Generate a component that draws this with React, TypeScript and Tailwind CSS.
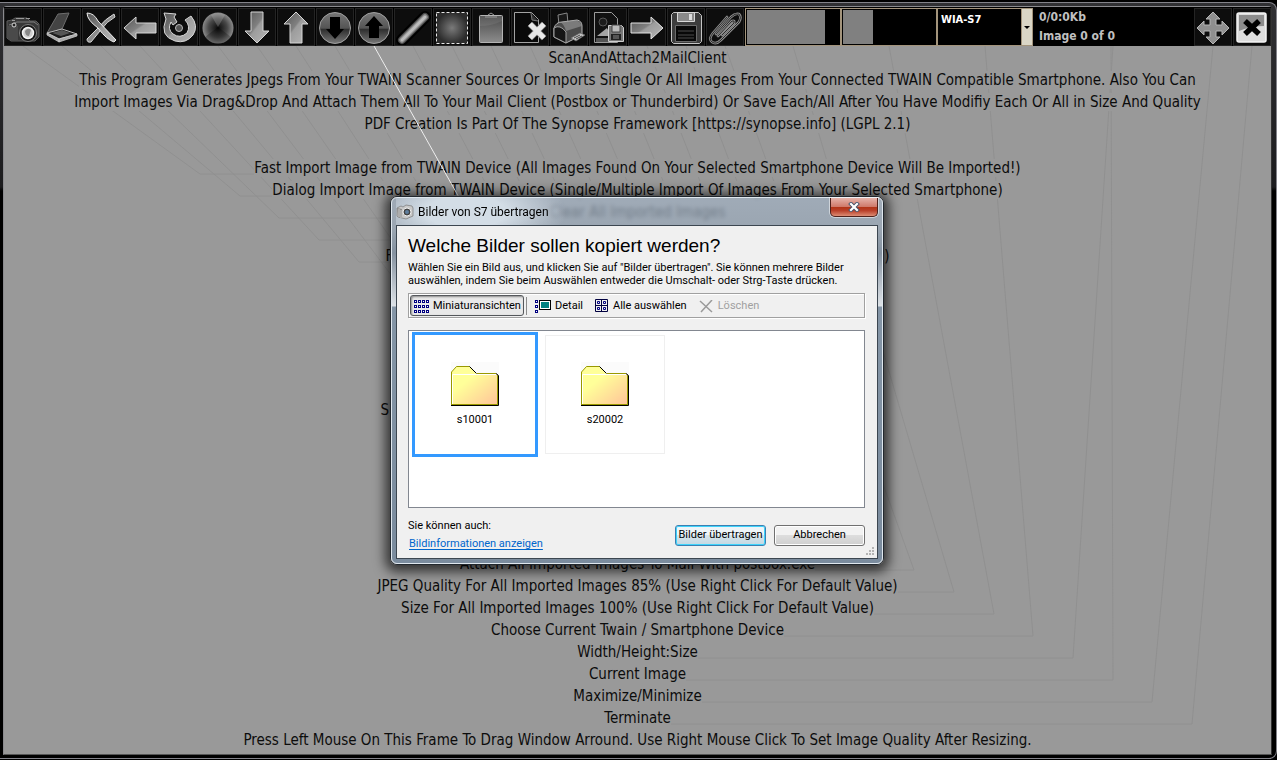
import { useState, type ReactNode } from "react";

type Row = { text?: string; hidden?: [string, string]; width?: string };

const rows: Row[] = [
  { text: "ScanAndAttach2MailClient" },
  {
    text: "This Program Generates Jpegs From Your TWAIN Scanner Sources Or Imports Single Or All Images From Your Connected TWAIN Compatible Smartphone. Also You Can",
  },
  {
    text: "Import Images Via Drag&Drop And Attach Them All To Your Mail Client (Postbox or Thunderbird) Or Save Each/All After You Have Modifiy Each Or All in Size And Quality",
  },
  { text: "PDF Creation Is Part Of The Synopse Framework [https://synopse.info] (LGPL 2.1)" },
  {},
  { text: "Fast Import Image from TWAIN Device (All Images Found On Your Selected Smartphone Device Will Be Imported!)" },
  { text: "Dialog Import Image from TWAIN Device (Single/Multiple Import Of Images From Your Selected Smartphone)" },
  { text: "Clear All Imported Images" },
  {},
  { hidden: ["F", ")"], width: "w-[504px]" },
  {},
  {},
  {},
  {},
  {},
  {},
  { hidden: ["S", ""], width: "w-[514px]" },
  {},
  {},
  {},
  {},
  {},
  {},
  { text: "Attach All Imported Images To Mail With postbox.exe" },
  { text: "JPEG Quality For All Imported Images 85% (Use Right Click For Default Value)" },
  { text: "Size For All Imported Images 100% (Use Right Click For Default Value)" },
  { text: "Choose Current Twain / Smartphone Device" },
  { text: "Width/Height:Size" },
  { text: "Current Image" },
  { text: "Maximize/Minimize" },
  { text: "Terminate" },
  { text: "Press Left Mouse On This Frame To Drag Window Arround. Use Right Mouse Click To Set Image Quality After Resizing." },
];

// x of every toolbar item that has a help line
const anchors = [
  ...Array.from({ length: 19 }, (_, i) => 23 + 39 * i),
  793, 889, 985, 1113, 1111, 1213, 1252,
];
const elbowX = (i: number) => 200 + Math.round(39.68 * i);
const elbowY = (i: number) => 174 + 22 * i;

const metal = "url(#metal)";
const rim = "#d6d6d6";

const tools: { label: string; icon: ReactNode }[] = [
  {
    label: "Fast import",
    icon: (
      <>
        <path d="M3 13l5-1 3-2h12l3 3h6l3 3v13l-4 4H7l-4-3V16z" fill="#383838" stroke="#5e5e5e" />
        <path d="M4 18h10v14H6l-2-2z" fill="#4a4a4a" />
        <path d="M5 17l8-3h17l4 3" stroke="#7c7c7c" />
        <path d="M12 10.500h8M22 10.500h4M8 12.500h3" stroke="#9a9a9a" />
        <circle cx="10" cy="17" r="2" fill="#222" stroke="#d8d8d8" />
        <circle cx="24" cy="25" r="8.500" fill="#151515" stroke="#7e7e7e" />
        <circle cx="24" cy="25" r="5.500" fill="#cfcfcf" stroke="#f4f4f4" strokeWidth="1.500" />
        <path d="M21 23q3-4 6-1l-2 6q-4 0-4-5z" fill="#888" />
      </>
    ),
  },
  {
    label: "Scanner dialog",
    icon: (
      <>
        <path d="M15 6l11-1-7 16-15 4z" fill="#444" stroke="#6d6d6d" />
        <path d="M4 25l15-4 15 5-18 5z" fill="#1d1d1d" stroke="#b9b9b9" />
        <path d="M4 25l12 6v3L4 27zM16 31l18-5v2l-18 6z" fill="#a8a8a8" stroke="#d0d0d0" strokeWidth=".7" />
        <path d="M9 25l10-3 8 3-9 3z" fill="#555" />
      </>
    ),
  },
  {
    label: "Clear images",
    icon: (
      <>
        <path d="M32 6q-9 5-16 14L5 31q0 4 4 3l9-11Q25 13 33 9z" fill="#8c8c8c" stroke={rim} />
        <path d="M5 5q7 0 11 8l18 19-2 2q-7-2-16-14Q5 12 5 5z" fill={metal} stroke="#eee" />
      </>
    ),
  },
  { label: "Previous", icon: <path d="M3 20L15 9v6h20v10H15v6z" fill={metal} stroke={rim} /> },
  {
    label: "Rotate",
    icon: (
      <>
        <path
          d="M4 5l12 1-2 3 3 5-4 3-2-3q-4 7 2 12 7 5 14-1 4-7-2-13l6-4q8 10 2 19-7 9-18 6Q-1 28 6 11z"
          fill={metal}
          stroke={rim}
        />
        <circle cx="19" cy="20" r="3.500" fill="#555" stroke="#bbb" />
      </>
    ),
  },
  {
    label: "Brightness",
    icon: (
      <>
        <circle cx="19" cy="20" r="15.500" fill="url(#ball)" />
        <path d="M19 19L6 29q6 7 13 7t13-7z" fill="#000" opacity=".25" />
        <path d="M19 19L12 7q7-4 14 0z" fill="#ccc" opacity=".25" />
      </>
    ),
  },
  { label: "Move down", icon: <path d="M13 4h12v19h6L19 35 7 23h6z" fill={metal} stroke={rim} /> },
  { label: "Move up", icon: <path d="M19 4l12 12h-6v19H13V16H7z" fill={metal} stroke={rim} /> },
  {
    label: "Decrease",
    icon: (
      <>
        <circle cx="19" cy="20" r="15.500" fill="url(#disc)" stroke="#a0a0a0" />
        <path d="M14 9h10v12h4l-9 10-9-10h4z" fill="#000" />
      </>
    ),
  },
  {
    label: "Increase",
    icon: (
      <>
        <circle cx="19" cy="20" r="15.500" fill="url(#disc)" stroke="#a0a0a0" />
        <path d="M19 8l9 10h-4v12H14V18h-4z" fill="#000" />
      </>
    ),
  },
  {
    label: "Draw",
    icon: (
      <g strokeLinecap="round">
        <path d="M8 32L31 9" stroke="#000" strokeWidth="12" />
        <path d="M8 32L31 9" stroke="#484848" strokeWidth="8" />
        <path d="M8 32L31 9" stroke="#8a8a8a" strokeWidth="5.500" />
        <path d="M8 32L31 9" stroke="#bcbcbc" strokeWidth="3" />
      </g>
    ),
  },
  {
    label: "Select area",
    icon: <rect x="3.500" y="4.500" width="31" height="31" fill="url(#glow)" stroke="#e8e8e8" strokeDasharray="3 2" />,
  },
  {
    label: "Paste",
    icon: (
      <>
        <rect x="7.500" y="7.500" width="23" height="27" rx="1" fill="url(#board)" stroke="#b4b4b4" />
        <path d="M8 18q12 0 22-5V8H8z" fill="#fff" opacity=".08" />
        <path d="M13 9h12M16 7l3-2 3 2" stroke="#999" fill="none" />
      </>
    ),
  },
  {
    label: "Delete page",
    icon: (
      <>
        <path d="M3.500 4.500h17l7 7v23h-24z" fill="#090909" stroke="#a2a2a2" />
        <path d="M20 5l1 7 6 1" fill="#333" stroke="#777" />
        <path d="M19 16l14 14M33 16L19 30" stroke="#777" strokeWidth="6.500" />
        <path d="M19 16l14 14M33 16L19 30" stroke="#e8e8e8" strokeWidth="5" />
      </>
    ),
  },
  {
    label: "Print",
    icon: (
      <>
        <path d="M8 7l9-2 1 10-9 2z" fill="#181818" stroke="#888" />
        <path d="M4 20q2-6 8-6l15-2q5 1 5 6v9l-16 8-12-6z" fill="#4b4b4b" stroke="#b5b5b5" />
        <path d="M4 20q6-4 12 4v11L4 29z" fill="#161616" stroke="#a0a0a0" />
        <path d="M16 23q-2-7-6-9l16-2q5 2 6 6z" fill="#9b9b9b" opacity=".6" />
        <path d="M21 30l9-5 5 2-9 6z" fill="#c5c5c5" stroke="#666" strokeWidth=".7" />
        <path d="M24 30l6-3M26 31l6-3" stroke="#444" />
      </>
    ),
  },
  {
    label: "Save image",
    icon: (
      <>
        <path d="M5.500 4.500h17l6 6v24h-23z" fill="#111" stroke="#9c9c9c" />
        <circle cx="14" cy="14" r="4" fill="#1b1b1b" stroke="#555" />
        <path d="M8 28l10-8 4 8z" fill="#a5a5a5" />
        <path d="M7 30h12v4H7z" fill="#555" />
        <path d="M19.500 17.500h13l2 2v14h-15z" fill="#777" stroke="#cfcfcf" />
        <path d="M23 17h8v7h-8z" fill="#bbb" stroke="#444" />
        <path d="M22 26h10v6H22z" fill="#222" />
        <path d="M24 28h6M24 30h6" stroke="#888" />
      </>
    ),
  },
  { label: "Next", icon: <path d="M3 15h20V9l12 11-12 11v-6H3z" fill={metal} stroke="#e4e4e4" /> },
  {
    label: "Save all",
    icon: (
      <>
        <path d="M4.500 6.500l2-2h25l3 3v26l-2 2h-26l-2-2z" fill="#3d3d3d" stroke="#c4c4c4" />
        <path d="M10.500 4.500h17v9h-17z" fill="#8a8a8a" stroke="#d8d8d8" />
        <path d="M22 6h3v6h-3z" fill="#ddd" />
        <path d="M8.500 17.500h21v16h-21z" fill="#080808" stroke="#6a6a6a" />
        <path d="M11 23h16M11 27h16M11 30h16" stroke="#4a4a4a" />
      </>
    ),
  },
  {
    label: "Attach to mail",
    icon: (
      <g fill="none" strokeLinecap="round" strokeLinejoin="round">
        <path d="M10 26L25 9q4-4 8-3 3 3 0 8L15 32q-5 5-9 2-4-3 1-9L21 9M12 28L26 13q3-1 2 2L16 27" stroke="#8d8d8d" strokeWidth="2.600" />
        <path d="M10 26L25 9q4-4 8-3 3 3 0 8L15 32q-5 5-9 2-4-3 1-9L21 9M12 28L26 13q3-1 2 2L16 27" stroke="#2a2a2a" />
      </g>
    ),
  },
];

function ToolButton({ label, children }: { label: string; children: ReactNode }) {
  return (
    <button type="button" aria-label={label} className="h-[38px] w-[38px] shrink-0 border border-[#242424] bg-[#0d0d0d]">
      <svg viewBox="1 1 36 36" className="block h-9 w-9" fill="none">
        {children}
      </svg>
    </button>
  );
}

function LevelSlider({
  label,
  value,
  max,
  onChange,
}: {
  label: string;
  value: number;
  max: number;
  onChange: (n: number) => void;
}) {
  const pct = (value / max) * 100;
  return (
    <div className="h-[38px] w-24 shrink-0 border border-[#a3947c] bg-black p-px">
      <input
        type="range"
        aria-label={label}
        min={0}
        max={max}
        value={value}
        onChange={(e) => onChange(Number(e.target.value))}
        className="block h-full w-full appearance-none [&::-webkit-slider-thumb]:w-0 [&::-webkit-slider-thumb]:appearance-none"
        style={{ background: `linear-gradient(to right, #808080 ${pct}%, #000 ${pct}%)` }}
      />
    </div>
  );
}

function Folder() {
  return (
    <svg viewBox="0 0 48 48" className="h-12 w-12 bg-[#fbfbfb]" fill="none">
      <defs>
        <linearGradient id="folder" x1="0" y1="0" x2="1" y2="1">
          <stop offset=".35" stopColor="#ffff99" />
          <stop offset="1" stopColor="#ffc299" />
        </linearGradient>
      </defs>
      <path d="M.5 43V10l5-5.500h13l7 7h20l1.500 1V43z" fill="url(#folder)" />
      <path d="M1.500 42V12.500h44" stroke="#fff" />
      <path d="M.5 43V10l5-5.500h13M26 11.500h19M.5 42.500h46M46.500 13v30" stroke="#999900" />
      <path d="M18.500 4.500l7 7M45 11.500l2.500 2v30H0" stroke="#000" />
    </svg>
  );
}

function Squares({ cols, rows: n }: { cols: number; rows: number }) {
  return (
    <>
      {Array.from({ length: cols * n }, (_, i) => (
        <rect key={i} x={(i % cols) * 4 + 0.5} y={Math.floor(i / cols) * 5 + 0.5} width="2" height="2" stroke="#000080" fill="#fff" />
      ))}
    </>
  );
}

function TransferDialog() {
  const [selected, setSelected] = useState("s10001");
  return (
    <section
      role="dialog"
      aria-labelledby="dlg-title"
      className="w-[494px] rounded-[7px] border border-[#22282e] font-['Roboto',sans-serif] text-[11px] text-black shadow-[0_2px_12px_5px_rgba(0,0,0,0.65)]"
    >
      <div className="rounded-md border border-[#dfe7ee] bg-[linear-gradient(to_bottom,#a3b3c5b0_0px,#9cacbdb0_30px,#8592a0_55px,#dde2e7_108px,#8495a6_109px,#7b8c9e_340px)] px-1 pb-1 backdrop-blur-[2px]">
        <header className="flex h-[27px] justify-between bg-[radial-gradient(ellipse_100px_40px_at_70px_14px,#d3dde6_40%,transparent)]">
          <div className="flex items-center gap-1 pt-px">
            <svg viewBox="0 0 18 16" className="h-4 w-[18px]">
              <path d="M1 4l4-2 2 1 3-2 6 1 1 2v8l-7 3-8-2-1-1z" fill="#c9c9c9" stroke="#777" strokeWidth=".7" />
              <path d="M1 4l5 1v9l-4-1z" fill="#8a8a8a" />
              <path d="M3 5v8M5 6v8" stroke="#eee" strokeWidth=".7" />
              <circle cx="11" cy="8" r="4" fill="#444" stroke="#eee" />
              <circle cx="11" cy="8" r="2" fill="#5f7f9f" />
            </svg>
            <h1 id="dlg-title" className="text-xs">
              Bilder von S7 übertragen
            </h1>
          </div>
          <button
            type="button"
            aria-label="Schließen"
            className="flex h-[19px] w-12 items-center justify-center rounded-b-[5px] border border-t-0 border-[#50211b] bg-[linear-gradient(#e6b3aa,#cf7a6b_48%,#b23418_52%,#b9402a_70%,#dd8c74)] shadow-[0_0_0_1px_#ffffff80]"
          >
            <svg viewBox="0 0 12 10" className="h-2.5 w-3">
              <path d="M3 2l6 6M9 2L3 8" stroke="#46536a" strokeWidth="4" strokeLinecap="square" />
              <path d="M3 2l6 6M9 2L3 8" stroke="#fff" strokeWidth="2.200" strokeLinecap="square" />
            </svg>
          </button>
        </header>

        <div className="relative border border-[#3c4650] bg-[#f0f0f0] pt-2 pr-3 pb-[5px] pl-[11px]">
          <h2 className="font-['Liberation_Sans',sans-serif] text-[19px] leading-6">Welche Bilder sollen kopiert werden?</h2>
          <p className="mt-[3px] leading-[13px]">
            Wählen Sie ein Bild aus, und klicken Sie auf "Bilder übertragen". Sie können mehrere Bilder
            <br />
            auswählen, indem Sie beim Auswählen entweder die Umschalt- oder Strg-Taste drücken.
          </p>

          {/* Ansichten */}
          <div className="mt-1.5 flex h-[25px] items-center border border-[#a0a0a0] px-px shadow-[inset_1px_1px_#fff,1px_1px_#fff]">
            <button
              type="button"
              className="flex h-[21px] w-[114px] items-center gap-[3px] rounded-[3px] border border-[#55585c] bg-[#e9e9e9] pt-px pl-[3px] shadow-[inset_1px_1px_2px_#0006]"
            >
              <svg viewBox="0 0 16 13" className="h-[13px] w-4">
                <Squares cols={4} rows={3} />
              </svg>
              Miniaturansichten
            </button>
            <span className="ml-0.5 h-[18px] w-px bg-[#8c8c8c]" />
            <button type="button" className="ml-2 flex items-center gap-1 pt-px">
              <svg viewBox="0 0 16 13" className="h-[13px] w-4">
                <Squares cols={1} rows={3} />
                <rect x="4.500" y=".5" width="11" height="9" fill="#fff" stroke="#000" />
                <rect x="6" y="2" width="8" height="6" fill="#008080" />
              </svg>
              Detail
            </button>
            <button type="button" className="ml-3 flex items-center gap-1 pt-px">
              <svg viewBox="0 0 14 14" className="h-3.5 w-3.5" fill="none">
                <path d="M.5.5h12v12H.5zM6.500.5v12M.5 6.500h12" stroke="#000040" />
                <path d="M2.500 2.500h2v2h-2zM8.500 2.500h2v2h-2zM2.500 8.500h2v2h-2zM8.500 8.500h2v2h-2z" stroke="#000080" />
              </svg>
              Alle auswählen
            </button>
            <button type="button" disabled className="ml-3 flex items-center gap-1 pt-px text-[#a0a0a0]">
              <svg viewBox="0 0 15 13" className="h-[13px] w-[15px]">
                <path d="M1 1l12 11M13 0L2 12" stroke="#9a9a9a" strokeWidth="1.500" />
              </svg>
              Löschen
            </button>
          </div>

          <div className="mt-3 flex h-[178px] items-start gap-1 border border-[#828790] bg-white px-[3px] pt-px">
            {["s10001", "s20002"].map((name) => (
              <button
                key={name}
                type="button"
                onClick={() => setSelected(name)}
                className={`flex h-[125px] w-[126px] flex-col items-center border-[3px] ${
                  selected === name ? "border-[#3399ff]" : "border-transparent outline outline-[#efefef] -outline-offset-4"
                }`}
              >
                <span className="mt-[27px]">
                  <Folder />
                </span>
                <span className="mt-0.5 leading-4">{name}</span>
              </button>
            ))}
          </div>

          <footer className="mt-[9px] flex items-center justify-between">
            <div className="leading-[18px]">
              <p>Sie können auch:</p>
              <a href="#info" className="ml-px text-[#0066cc] underline underline-offset-2">
                Bildinformationen anzeigen
              </a>
            </div>
            <div className="flex gap-2">
              <button
                type="button"
                className="h-[21px] w-[91px] rounded-[3px] border border-[#3c7fb1] bg-[linear-gradient(#eef5f9_45%,#d5e4ec_50%,#c4d8e2)] shadow-[inset_0_0_0_1px_#3ed3fb]"
              >
                Bilder übertragen
              </button>
              <button
                type="button"
                className="h-[21px] w-[91px] rounded-[3px] border border-[#707070] bg-[linear-gradient(#f2f2f2_45%,#dddddd_50%,#cfcfcf)] shadow-[inset_0_0_0_1px_#fff]"
              >
                Abbrechen
              </button>
            </div>
          </footer>
          <svg viewBox="0 0 9 9" className="absolute right-0.5 bottom-0.5 h-[9px] w-[9px]" fill="#b4b4b4">
            <path d="M6 0h2v2H6zM3 3h2v2H3zM6 3h2v2H6zM0 6h2v2H0zM3 6h2v2H3zM6 6h2v2H6z" />
          </svg>
        </div>
      </div>
    </section>
  );
}

export default function App() {
  const [quality, setQuality] = useState(85);
  const [size, setSize] = useState(100);

  return (
    <div className="min-h-screen bg-black pt-0.5 pb-px font-['DejaVu_Sans_Condensed','DejaVu_Sans',sans-serif]">
      <svg className="absolute h-0 w-0">
        <defs>
          <linearGradient id="metal" x1="0" y1="0" x2="1" y2="1">
            <stop offset="0" stopColor="#555" />
            <stop offset=".45" stopColor="#808080" />
            <stop offset=".5" stopColor="#9c9c9c" />
            <stop offset="1" stopColor="#b8b8b8" />
          </linearGradient>
          <radialGradient id="ball">
            <stop offset="0" stopColor="#0a0a0a" />
            <stop offset=".6" stopColor="#484848" />
            <stop offset="1" stopColor="#8a8a8a" />
          </radialGradient>
          <linearGradient id="disc" x1="0" y1="0" x2="0" y2="1">
            <stop offset="0" stopColor="#777" />
            <stop offset=".5" stopColor="#555" />
            <stop offset=".55" stopColor="#2f2f2f" />
            <stop offset="1" stopColor="#777" />
          </linearGradient>
          <radialGradient id="glow">
            <stop offset="0" stopColor="#7a7a7a" />
            <stop offset="1" stopColor="#2c2c2c" />
          </radialGradient>
          <linearGradient id="board" x1="0" y1="0" x2="0" y2="1">
            <stop offset="0" stopColor="#4a4a4a" />
            <stop offset="1" stopColor="#8c8c8c" />
          </linearGradient>
        </defs>
      </svg>

      <div className="rounded-r-lg border-y border-r border-[#83838a] bg-[linear-gradient(#303033,#1c1c1e_184px,#000_188px)] pt-[3px] pr-1 pb-[3px] pl-[3px]">
        <div className="rounded-t-[4px] border border-[#8a8a8e] border-r-[#333] border-b-[#555]">
          <nav className="flex h-[39px] items-end overflow-hidden bg-black">
            <div className="flex shrink-0 gap-px pr-px">
              {tools.map((t) => (
                <ToolButton key={t.label} label={t.label}>
                  {t.icon}
                </ToolButton>
              ))}
            </div>
            <LevelSlider label="JPEG quality" value={quality} max={100} onChange={setQuality} />
            <LevelSlider label="Image size" value={size} max={310} onChange={setSize} />
            <div className="relative h-[38px] w-24 shrink-0">
              <select
                aria-label="TWAIN device"
                className="block h-full w-full appearance-none border border-[#a3947c] bg-black pb-3.5 pl-[3px] text-[11px] font-bold text-white"
              >
                <option>WIA-S7</option>
              </select>
              <span className="pointer-events-none absolute inset-y-0 right-0 flex w-3 items-center justify-center border border-[#a3947c] bg-[#dad6c6]">
                <svg viewBox="0 0 6 3" className="h-[3px] w-1.5">
                  <path d="M0 0h6L3 3z" />
                </svg>
              </span>
            </div>
            <div className="min-w-0 flex-1 pl-1.5 text-xs leading-[19px] font-bold text-[#c0c0c0]">
              <p>0/0:0Kb</p>
              <p>Image 0 of 0</p>
            </div>
            <div className="flex shrink-0 gap-px">
              <ToolButton label="Move">
                <path
                  d="M19 4l7 7h-4v6h6v-4l7 7-7 7v-4h-6v6h4l-7 7-7-7h4v-6h-6v4l-7-7 7-7v4h6v-6h-4z"
                  fill="#8f8f8f"
                  stroke="#b5b5b5"
                />
              </ToolButton>
              <ToolButton label="Terminate">
                <rect x="4" y="5" width="29" height="29" rx="2" fill="#dcdcdc" stroke="#f4f4f4" strokeWidth="1.500" />
                <path d="M6 7h25v11q-13 0-25 5z" fill="#8c8c8c" />
                <path d="M12 13l14 13M26 13L12 26" stroke="#000" strokeWidth="5.500" />
              </ToolButton>
            </div>
          </nav>

          <main className="relative bg-[#999999] pt-px pb-[3px] text-center text-[15px] leading-[22px] whitespace-nowrap text-[#0c0c0c]">
            <svg
              viewBox="4 46 1267 708"
              preserveAspectRatio="none"
              className="absolute inset-0 h-full w-full"
              fill="none"
              stroke="#909090"
            >
              {anchors.map((x, i) => (
                <path key={i} d={`M${x} 46L${elbowX(i)} ${elbowY(i)}H638`} />
              ))}
            </svg>
            {rows.map((r, i) => (
              <div key={i} className="relative h-[22px]">
                {r.text && <span className="bg-[#999999]">{r.text}</span>}
                {r.hidden && (
                  <span className={`mx-auto flex justify-between ${r.width}`}>
                    <span>{r.hidden[0]}</span>
                    <span>{r.hidden[1]}</span>
                  </span>
                )}
              </div>
            ))}
            <svg
              viewBox="4 46 1267 708"
              preserveAspectRatio="none"
              className="pointer-events-none absolute inset-0 h-full w-full"
              fill="none"
              stroke="#f0f0f0"
            >
              <path d={`M${anchors[9]} 46L${elbowX(9)} ${elbowY(9)}`} />
            </svg>
          </main>
        </div>
      </div>

      <div className="pointer-events-none fixed inset-0 flex items-center justify-center pt-px pr-[3px]">
        <div className="pointer-events-auto">
          <TransferDialog />
        </div>
      </div>
    </div>
  );
}
